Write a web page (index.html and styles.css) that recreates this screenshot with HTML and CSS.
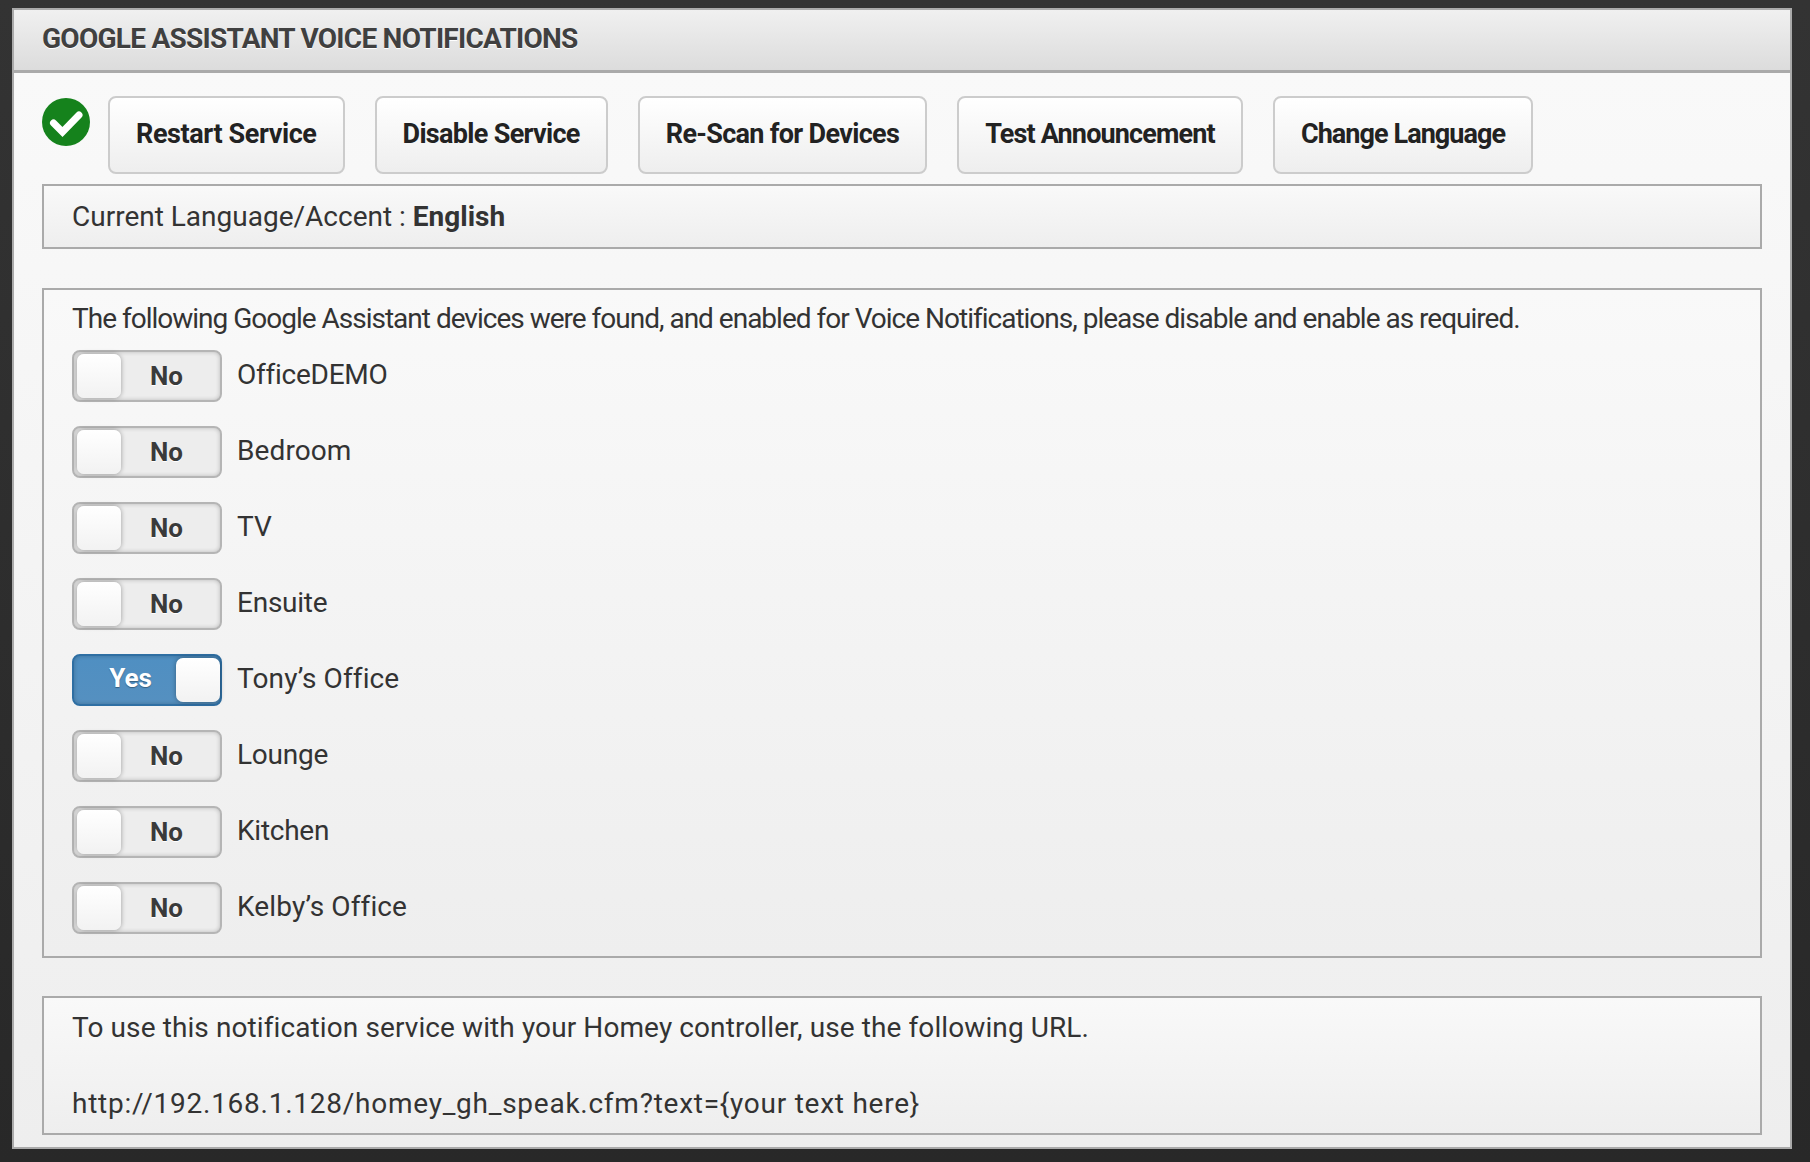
FILE: index.html
```html
<!DOCTYPE html>
<html lang="en">
<head>
<meta charset="utf-8">
<title>Google Assistant Voice Notifications</title>
<link rel="stylesheet" href="styles.css">
</head>
<body>
<main class="window">
  <header class="window-head"><h1>GOOGLE ASSISTANT VOICE NOTIFICATIONS</h1></header>
  <div class="window-body">
    <div class="actions">
      <svg class="status" viewBox="0 0 48 48" aria-hidden="true">
        <circle cx="24" cy="24" r="24" fill="#15821c"/>
        <path d="M11.5 25 L20.5 34 L37 17" fill="none" stroke="#fff" stroke-width="7" stroke-linecap="round" stroke-linejoin="miter"/>
      </svg>
      <button class="btn btn-restart">Restart Service</button>
      <button class="btn btn-disable">Disable Service</button>
      <button class="btn btn-rescan">Re-Scan for Devices</button>
      <button class="btn btn-test">Test Announcement</button>
      <button class="btn btn-lang">Change Language</button>
    </div>
    <section class="panel panel-lang">Current Language/Accent : <b>English</b></section>
    <section class="panel panel-devices">
      <p class="intro">The following Google Assistant devices were found, and enabled for Voice Notifications, please disable and enable as required.</p>
      <div class="device"><span class="toggle"><span class="knob"></span><span class="state">No</span></span><span class="name">OfficeDEMO</span></div>
      <div class="device"><span class="toggle"><span class="knob"></span><span class="state">No</span></span><span class="name name-mid">Bedroom</span></div>
      <div class="device"><span class="toggle"><span class="knob"></span><span class="state">No</span></span><span class="name name-mid">TV</span></div>
      <div class="device"><span class="toggle"><span class="knob"></span><span class="state">No</span></span><span class="name">Ensuite</span></div>
      <div class="device"><span class="toggle on"><span class="state">Yes</span><span class="knob"></span></span><span class="name name-wide">Tony’s Office</span></div>
      <div class="device"><span class="toggle"><span class="knob"></span><span class="state">No</span></span><span class="name">Lounge</span></div>
      <div class="device"><span class="toggle"><span class="knob"></span><span class="state">No</span></span><span class="name">Kitchen</span></div>
      <div class="device"><span class="toggle"><span class="knob"></span><span class="state">No</span></span><span class="name name-wide">Kelby’s Office</span></div>
    </section>
    <section class="panel panel-url">
      <span class="url-note">To use this notification service with your Homey controller, use the following URL.</span><br><br>
      <span class="url-link">http://192.168.1.128/homey_gh_speak.cfm?text={your text here}</span>
    </section>
  </div>
</main>
</body>
</html>
```
FILE: styles.css
```css
* { box-sizing: border-box; }
html, body { height: 100%; }
body {
  margin: 0;
  padding: 8px 18px 13px 12px;
  background: linear-gradient(#333, #282828);
  font-family: "Roboto", "Liberation Sans", sans-serif;
  font-size: 28px;
  line-height: 38px;
  color: #333;
}
.window { border: 2px solid #aaa; height: 1141px; display: flex; flex-direction: column; }
.window-head {
  height: 63px;
  flex: none;
  border-bottom: 3px solid #aaa;
  background: linear-gradient(#f0f0f0, #dcdcdc);
  padding: 0 28px 2px;
  display: flex;
  align-items: center;
}
.window-head h1 {
  margin: 0;
  font-size: 28px;
  font-weight: 700;
  letter-spacing: -.74px;
  color: #404040;
  text-shadow: 0 1px 0 #fff;
}
.window-body {
  flex: 1;
  padding: 23px 28px 12px;
  background: linear-gradient(#f9f9f9, #eee);
}
.actions { display: flex; align-items: flex-start; height: 78px; }
.status { width: 48px; height: 48px; margin: 2px 18px 0 0; flex: none; }
.btn {
  height: 78px;
  padding: 0 26px 2px;
  margin-right: 30px;
  border: 2px solid #ccc;
  border-radius: 8px;
  background: linear-gradient(#fff, #eee);
  font: 700 27px/38px "Roboto", "Liberation Sans", sans-serif;
  color: #222;
}
.btn-restart { letter-spacing: -.4px; }
.btn-disable { letter-spacing: -.68px; }
.btn-rescan { letter-spacing: -.68px; }
.btn-test { letter-spacing: -.85px; }
.btn-lang { letter-spacing: -.93px; }
.panel {
  border: 2px solid #aaa;
  background: linear-gradient(#f9f9f9, #eee);
  padding: 0 28px;
}
.panel b { color: #333; }
.panel-lang { margin-top: 10px; height: 65px; padding-top: 12px; }
.panel-devices { margin-top: 39px; height: 670px; padding-top: 10px; }
.panel-url { margin-top: 38px; height: 139px; padding-top: 11px; }
.intro { margin: 0 0 12px; letter-spacing: -1px; }
.url-note { letter-spacing: .1px; }
.url-link { letter-spacing: .75px; }
.device { display: flex; align-items: center; height: 52px; margin-bottom: 24px; }
.toggle {
  width: 150px;
  height: 52px;
  flex: none;
  display: flex;
  align-items: center;
  padding: 0 3px;
  border: 2px solid #b5b5b5;
  border-radius: 8px;
  background: #ededed;
  box-shadow: inset 0 0 4px rgba(0, 0, 0, .22);
}
.knob {
  width: 44px;
  height: 44px;
  flex: none;
  border-radius: 7px;
  background: linear-gradient(#fff, #f2f2f2);
  box-shadow: 0 0 5px rgba(0, 0, 0, .35);
}
.state {
  flex: 1;
  text-align: center;
  font-weight: 700;
  font-size: 26px;
  color: #3a3a3a;
  padding-right: 5px;
  text-shadow: 0 1px 0 #fff;
}
.toggle.on { background: linear-gradient(#4f8fc2, #5590c0); border-color: #2f6fa3; padding-right: 0; }
.toggle.on .state { color: #fff; text-shadow: 0 1px 1px rgba(0, 0, 0, .35); margin-top: -4px; padding: 0 0 0 8px; }
.name { margin-left: 15px; padding-bottom: 2px; letter-spacing: -.25px; }
.name-mid { letter-spacing: .1px; }
.name-wide { letter-spacing: .12px; }
```
